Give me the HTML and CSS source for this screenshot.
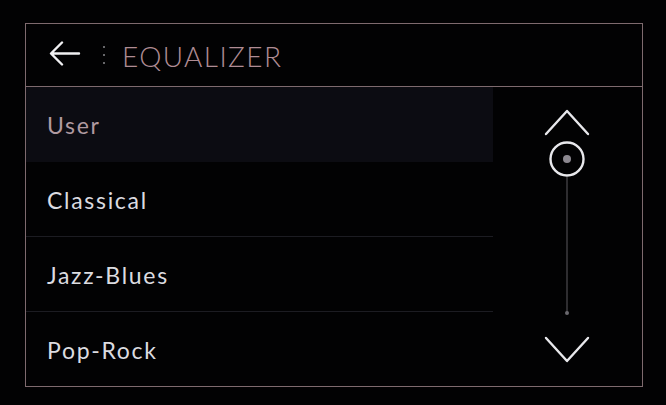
FILE: index.html
```html
<!DOCTYPE html>
<html>
<head>
<meta charset="utf-8">
<link rel="stylesheet" href="styles.css">
</head>
<body>
<div class="frame">
  <div class="header">
    <svg class="back" width="34" height="28" viewBox="0 0 34 28">
      <path d="M31 12.5 H4 M14 1.5 L3 12.5 L14 23.5" fill="none" stroke="#f0f0f2" stroke-width="2.4" stroke-linecap="round" stroke-linejoin="round"/>
    </svg>
    <div class="dots"><span></span><span></span><span></span></div>
    <div class="title">EQUALIZER</div>
  </div>
  <div class="body">
    <div class="list">
      <div class="row active">User</div>
      <div class="row">Classical</div>
      <div class="row">Jazz-Blues</div>
      <div class="row last">Pop-Rock</div>
    </div>
    <div class="scroll">
      <svg width="148" height="299" viewBox="0 0 148 299">
        <path d="M53 47 L74 24 L95 47" fill="none" stroke="#e8e8ec" stroke-width="2.4" stroke-linecap="round" stroke-linejoin="round"/>
        <circle cx="74" cy="72" r="16.5" fill="none" stroke="#e8e8ec" stroke-width="2.4"/>
        <circle cx="74" cy="72" r="4" fill="#8c8890"/>
        <line x1="74" y1="90" x2="74" y2="226" stroke="#5a585e" stroke-width="1"/>
        <circle cx="74" cy="226" r="2" fill="#6a686e"/>
        <path d="M53 251 L74 274 L95 251" fill="none" stroke="#e8e8ec" stroke-width="2.4" stroke-linecap="round" stroke-linejoin="round"/>
      </svg>
    </div>
  </div>
</div>
</body>
</html>
```
FILE: styles.css
```css
html, body {
  margin: 0;
  padding: 0;
  background: #020203;
}
body {
  width: 666px;
  height: 405px;
  overflow: hidden;
  font-family: Lato, "Noto Sans", sans-serif;
}
.frame {
  margin: 23px 0 0 25px;
  width: 616px;
  height: 362px;
  border: 1px solid #7e6a6e;
}
.header {
  height: 62px;
  border-bottom: 1px solid #7e6a6e;
  display: flex;
  align-items: center;
  padding-left: 22px;
}
.back {
  display: block;
  margin-top: -1px;
}
.dots {
  display: flex;
  flex-direction: column;
  gap: 6px;
  margin-left: 21px;
  margin-top: -1px;
}
.dots span {
  width: 2px;
  height: 2px;
  border-radius: 1px;
  background: #8a8a8e;
}
.title {
  margin-left: 17px;
  font-size: 28px;
  font-weight: 300;
  color: #b08c94;
  letter-spacing: 1.4px;
  margin-top: 1px;
}
.body {
  display: flex;
  height: 299px;
}
.list {
  width: 467px;
  display: flex;
  flex-direction: column;
}
.row {
  height: 73px;
  padding-top: 1px;
  border-bottom: 1px solid #1c1c22;
  display: flex;
  align-items: center;
  padding-left: 21px;
  font-size: 23px;
  font-weight: 400;
  color: #dcdce0;
  letter-spacing: 1.7px;
}
.row.last {
  border-bottom: none;
}
.row.active {
  background: #0c0c12;
  color: #b09aa0;
  border-bottom-color: #0c0c12;
}
.scroll {
  width: 148px;
}
.scroll svg {
  display: block;
}
```
